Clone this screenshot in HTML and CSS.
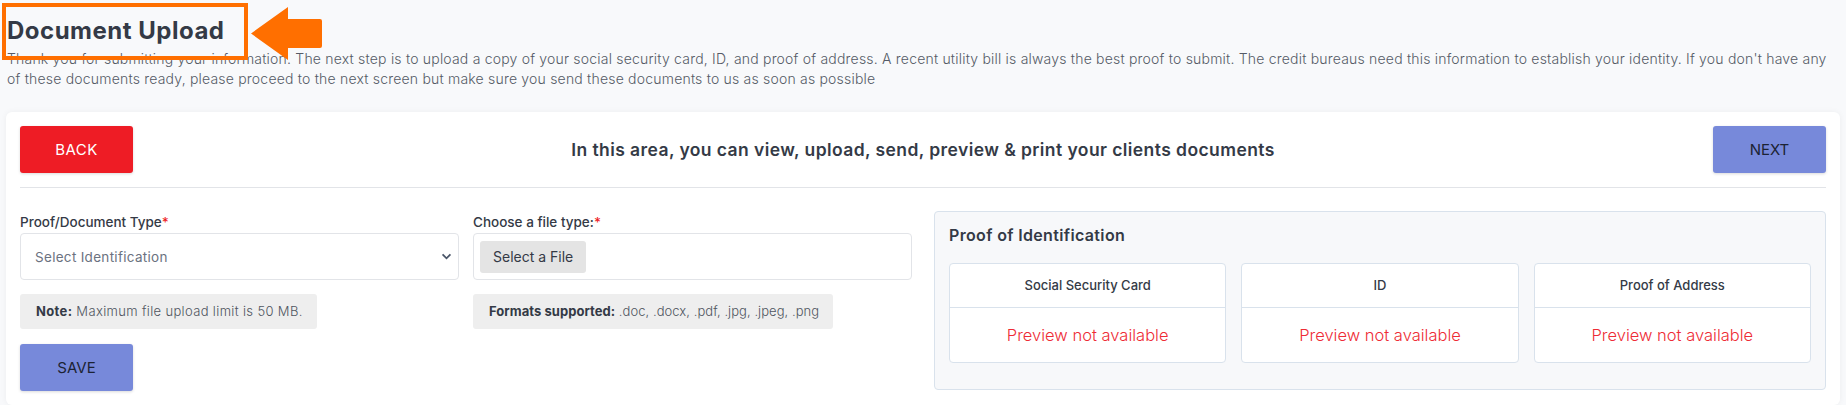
FILE: index.html
```html
<!DOCTYPE html>
<html lang="en">
<head>
    <meta charset="UTF-8">
    <title>Document Upload</title>
    <link rel="stylesheet" href="styles.css">
</head>
<body>
    <div class="page-head">
        <h1>Document Upload</h1>
        <p>Thank you for submitting your information. The next step is to upload a copy of your social security card, ID, and proof of address. A recent utility bill is always the best proof to submit. The credit bureaus need this information to establish your identity. If you don't have any of these documents ready, please proceed to the next screen but make sure you send these documents to us as soon as possible</p>
    </div>

    <div class="highlight-box"></div>
    <svg class="highlight-arrow" viewBox="0 0 71 53" width="71" height="53">
        <path d="M0 26.5 L37 0 L37 12 L69 12 Q71 12 71 14 L71 39 Q71 41 69 41 L37 41 L37 53 Z" fill="#ff6f00"/>
    </svg>

    <div class="card">
        <div class="card-top">
            <button class="btn btn-back">BACK</button>
            <h2>In this area, you can view, upload, send, preview &amp; print your clients documents</h2>
            <button class="btn btn-blue">NEXT</button>
        </div>

        <div class="card-body">
            <div class="upload-form">
                <div class="form-row">
                    <div class="field">
                        <label>Proof/Document Type<span class="req">*</span></label>
                        <div class="input-box select-box">
                            <span>Select Identification</span>
                            <svg viewBox="0 0 12 8" width="11" height="7"><path d="M1.5 1.5 L6 6 L10.5 1.5" fill="none" stroke="#4a5568" stroke-width="2"/></svg>
                        </div>
                        <div class="hint hint-note"><b>Note:</b> Maximum file upload limit is 50 MB.</div>
                    </div>
                    <div class="field">
                        <label>Choose a file type:<span class="req">*</span></label>
                        <div class="input-box file-box">
                            <span class="file-btn">Select a File</span>
                        </div>
                        <div class="hint"><b>Formats supported:</b> .doc, .docx, .pdf, .jpg, .jpeg, .png</div>
                    </div>
                </div>
                <button class="btn btn-blue btn-save">SAVE</button>
            </div>

            <div class="proof-panel">
                <h3>Proof of Identification</h3>
                <div class="proof-grid">
                    <div class="proof-item">
                        <div class="proof-title">Social Security Card</div>
                        <div class="proof-preview">Preview not available</div>
                    </div>
                    <div class="proof-item">
                        <div class="proof-title">ID</div>
                        <div class="proof-preview">Preview not available</div>
                    </div>
                    <div class="proof-item">
                        <div class="proof-title">Proof of Address</div>
                        <div class="proof-preview">Preview not available</div>
                    </div>
                </div>
            </div>
        </div>
    </div>
</body>
</html>
```

FILE: styles.css
```css
body {
    margin: 0;
    height: 405px;
    overflow: hidden;
    background-color: #f8f9fb;
    font-family: "Inter", "Noto Sans", sans-serif;
    color: #343a46;
}

.page-head {
    padding: 15px 6px 0 7px;
    height: 112px;
    box-sizing: border-box;
}

h1 {
    margin: 0;
    font-size: 24px;
    line-height: 31px;
    font-weight: 700;
    letter-spacing: 0.5px;
}

.page-head p {
    margin: 3px 0 0;
    font-size: 14px;
    line-height: 20px;
    font-weight: 300;
    letter-spacing: 0.2px;
    color: #555b66;
}

.highlight-box {
    position: absolute;
    left: 2px;
    top: 3px;
    width: 238px;
    height: 49px;
    border: 4px solid #ff6f00;
}

.highlight-arrow {
    position: absolute;
    left: 251px;
    top: 7px;
}

.card {
    margin: 0 6px;
    padding: 14px;
    height: 293px;
    box-sizing: border-box;
    background-color: white;
    border-radius: 6px;
    box-shadow: 0 0 6px rgba(0,0,0,0.05);
}

.card-top {
    display: flex;
    align-items: center;
    justify-content: space-between;
    padding-bottom: 14px;
    border-bottom: 1px solid #e2e4e8;
}

.card-top h2 {
    margin: 0;
    font-size: 17.5px;
    font-weight: 600;
    letter-spacing: 0.42px;
}

.btn {
    width: 113px;
    height: 47px;
    border: none;
    border-radius: 3px;
    font-family: inherit;
    font-size: 15px;
    box-shadow: 0 1px 3px rgba(0,0,0,0.15);
}

.btn-back {
    background-color: #ee1c25;
    color: white;
    letter-spacing: 0.5px;
}

.btn-blue {
    background-color: #7789da;
    color: #1c2333;
}

.card-body {
    display: flex;
    justify-content: space-between;
    padding-top: 23px;
}

.upload-form {
    width: 892px;
}

.form-row {
    display: flex;
    gap: 14px;
}

.field {
    width: 439px;
}

.field label {
    display: block;
    font-size: 13.5px;
    line-height: 22px;
    font-weight: 500;
}

.req {
    color: #ee1c25;
}

.input-box {
    display: flex;
    align-items: center;
    height: 47px;
    box-sizing: border-box;
    border: 1px solid #e2e4e8;
    border-radius: 4px;
    background-color: white;
}

.select-box {
    justify-content: space-between;
    padding: 0 6px 0 14px;
    font-size: 13.5px;
    letter-spacing: 0.3px;
    color: #6b7280;
}

.file-box {
    padding-left: 6px;
}

.file-btn {
    padding: 0 13px;
    line-height: 32px;
    border-radius: 3px;
    background-color: #e4e4e4;
    font-size: 14px;
}

.hint {
    display: inline-block;
    margin-top: 14px;
    padding: 0 14px 0 16px;
    line-height: 35px;
    border-radius: 3px;
    background-color: #eeeeee;
    font-size: 13px;
    font-weight: 300;
    letter-spacing: 0.05px;
    color: #4f5560;
}

.hint b {
    font-weight: 700;
    color: #343a46;
}

.hint-note {
    letter-spacing: 0.35px;
}

.btn-save {
    display: block;
    margin-top: 15px;
}

.proof-panel {
    width: 892px;
    height: 179px;
    box-sizing: border-box;
    padding: 13px 14px;
    background-color: #f7f8fa;
    border: 1px solid #d9e2ec;
    border-radius: 4px;
}

.proof-panel h3 {
    margin: 0 0 18px;
    font-size: 16px;
    line-height: 20px;
    font-weight: 600;
    letter-spacing: 0.35px;
}

.proof-grid {
    display: grid;
    grid-template-columns: repeat(3, 1fr);
    gap: 15px;
}

.proof-item {
    height: 100px;
    box-sizing: border-box;
    background-color: white;
    border: 1px solid #d9e2ec;
    border-radius: 4px;
    text-align: center;
}

.proof-title {
    height: 44px;
    line-height: 43px;
    box-sizing: border-box;
    border-bottom: 1px solid #d9e2ec;
    font-size: 13px;
    font-weight: 500;
}

.proof-preview {
    line-height: 54px;
    font-size: 16.5px;
    font-weight: 300;
    color: #ee2b35;
}
```
